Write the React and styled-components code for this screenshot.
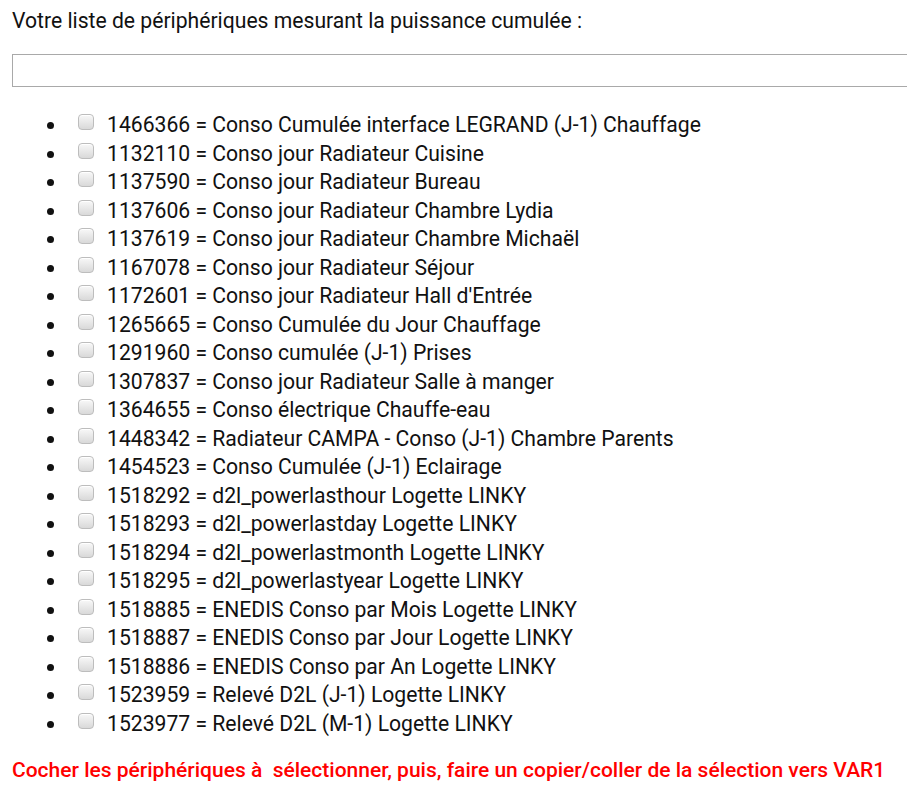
import React from "react";
import styled, { createGlobalStyle } from "styled-components";

const GlobalStyle = createGlobalStyle`
  html, body {
    margin: 0;
    padding: 0;
    background: #ffffff;
  }
  body {
    font-family: Roboto, "Liberation Sans", sans-serif;
    color: #111111;
  }
`;

const devices = [
  "1466366 = Conso Cumulée interface LEGRAND (J-1) Chauffage",
  "1132110 = Conso jour Radiateur Cuisine",
  "1137590 = Conso jour Radiateur Bureau",
  "1137606 = Conso jour Radiateur Chambre Lydia",
  "1137619 = Conso jour Radiateur Chambre Michaël",
  "1167078 = Conso jour Radiateur Séjour",
  "1172601 = Conso jour Radiateur Hall d'Entrée",
  "1265665 = Conso Cumulée du Jour Chauffage",
  "1291960 = Conso cumulée (J-1) Prises",
  "1307837 = Conso jour Radiateur Salle à manger",
  "1364655 = Conso électrique Chauffe-eau",
  "1448342 = Radiateur CAMPA - Conso (J-1) Chambre Parents",
  "1454523 = Conso Cumulée (J-1) Eclairage",
  "1518292 = d2l_powerlasthour Logette LINKY",
  "1518293 = d2l_powerlastday Logette LINKY",
  "1518294 = d2l_powerlastmonth Logette LINKY",
  "1518295 = d2l_powerlastyear Logette LINKY",
  "1518885 = ENEDIS Conso par Mois Logette LINKY",
  "1518887 = ENEDIS Conso par Jour Logette LINKY",
  "1518886 = ENEDIS Conso par An Logette LINKY",
  "1523959 = Relevé D2L (J-1) Logette LINKY",
  "1523977 = Relevé D2L (M-1) Logette LINKY",
];

const Page = styled.div`
  padding: 8px 0 0 12px;
  font-size: 21.15px;
`;

const Title = styled.p`
  margin: 0;
  line-height: 26px;
`;

const Field = styled.input`
  display: block;
  box-sizing: border-box;
  width: calc(100% + 4px);
  height: 33px;
  margin: 20px 0 0;
  border: 1px solid #a9a9a9;
  outline: none;
  padding: 0 6px;
  font: inherit;
`;

const List = styled.ul`
  margin: 24px 0 0;
  padding: 0 0 0 55px;
  list-style: disc;
`;

const Item = styled.li`
  line-height: 28.5px;
  padding-left: 11px;
`;

const Box = styled.input.attrs({ type: "checkbox" })`
  appearance: none;
  -webkit-appearance: none;
  box-sizing: border-box;
  width: 16px;
  height: 16px;
  margin: 0 13px 0 0;
  vertical-align: 2px;
  border: 1px solid #bdbdbd;
  border-radius: 4px;
  background: linear-gradient(#f8f8f8, #d9d9d9);
  box-shadow: inset 0 1px 0 #ffffff;
`;

const Hint = styled.p`
  margin: 20px 0 0;
  color: #ff0000;
  font-weight: 500;
  font-size: 21px;
  white-space: pre;
`;

export default function App() {
  return (
    <>
      <GlobalStyle />
      <Page>
        <Title>Votre liste de périphériques mesurant la puissance cumulée :</Title>
        <Field type="text" />
        <List>
          {devices.map((d) => (
            <Item key={d}>
              <Box />
              {d}
            </Item>
          ))}
        </List>
        <Hint>Cocher les périphériques à  sélectionner, puis, faire un copier/coller de la sélection vers VAR1</Hint>
      </Page>
    </>
  );
}
